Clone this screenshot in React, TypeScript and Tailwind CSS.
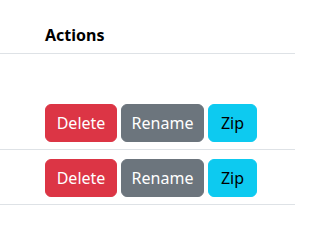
import React from "react"

const font = { fontFamily: '"Noto Sans", "Open Sans", sans-serif' }

const Actions = () => (
  <div className="flex gap-[4px]">
    <button className="h-[38px] w-[72px] rounded-[6px] border border-[#dc3545] bg-[#dc3545] text-[16px] text-white">
      Delete
    </button>
    <button className="h-[38px] w-[83px] rounded-[6px] border border-[#6c757d] bg-[#6c757d] text-[16px] text-white">
      Rename
    </button>
    <button className="h-[38px] w-[49px] rounded-[6px] border border-[#0dcaf0] bg-[#0dcaf0] text-[16px] text-black">
      Zip
    </button>
  </div>
)

export default function App() {
  return (
    <div className="w-[295px] h-[207px] overflow-hidden bg-white text-[#212529]" style={font}>
      {/* header */}
      <div className="flex h-[54px] items-end border-b border-[#dee2e6] pb-[6px] pl-[45px]">
        <span className="text-[16px] font-bold leading-[24px] text-black">Actions</span>
      </div>
      {/* row 1 */}
      <div className="flex h-[96px] items-end border-b border-[#dee2e6] pb-[7px] pl-[45px]">
        <Actions />
      </div>
      {/* row 2 */}
      <div className="flex h-[55px] items-end border-b border-[#dee2e6] pb-[7px] pl-[45px]">
        <Actions />
      </div>
    </div>
  )
}
